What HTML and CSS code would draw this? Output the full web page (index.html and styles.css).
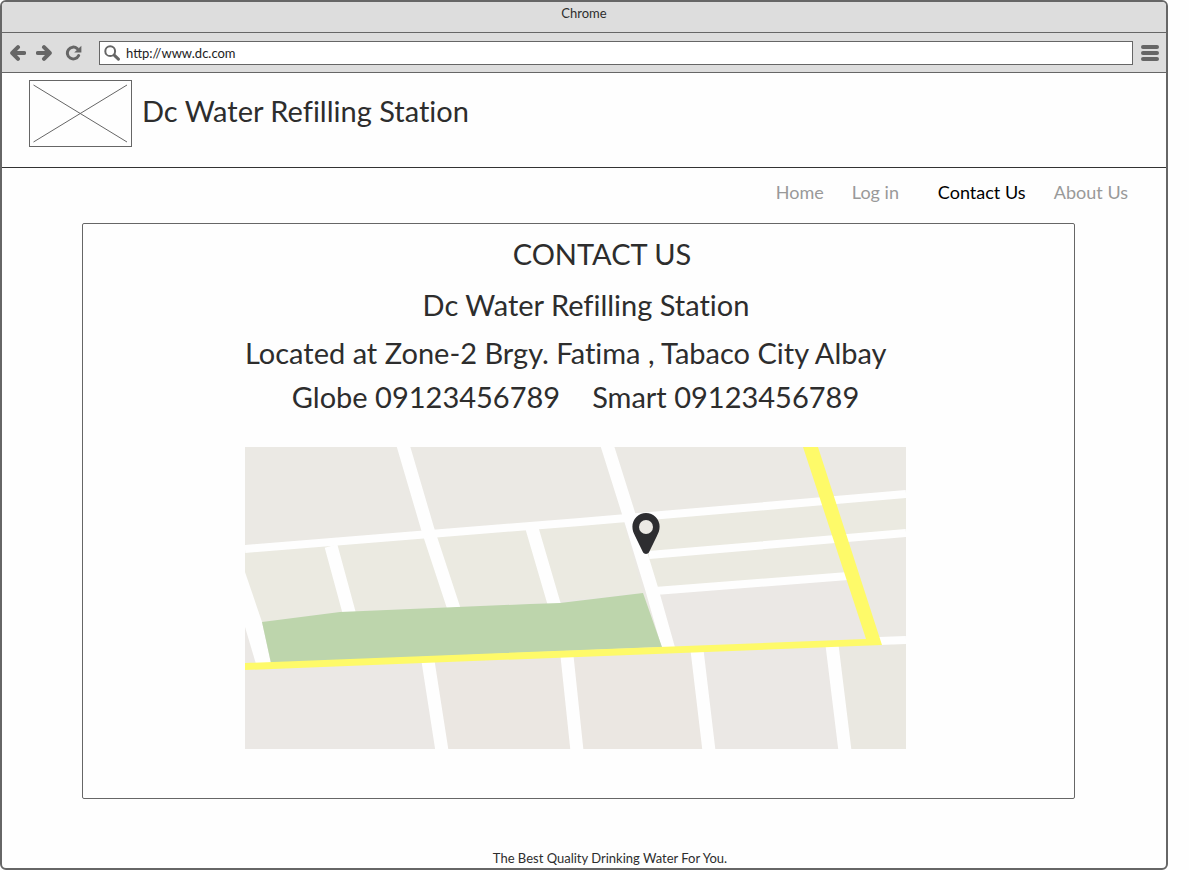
FILE: index.html
```html
<!DOCTYPE html>
<html lang="en">
<head>
<meta charset="utf-8">
<title>Dc Water Refilling Station</title>
<link rel="stylesheet" href="styles.css">
</head>
<body>
<div class="window">
  <div class="titlebar">Chrome</div>
  <div class="toolbar">
    <div class="controls">
      <button class="tool" type="button" aria-label="Back">
        <svg width="16" height="16" viewBox="0 0 16 16"><path class="stroke" d="M8 2.200 2.200 8 8 13.800M3 8H14.200"/></svg>
      </button>
      <button class="tool" type="button" aria-label="Forward">
        <svg width="16" height="16" viewBox="0 0 16 16"><path class="stroke" d="M8 2.200 13.800 8 8 13.800M13 8H1.800"/></svg>
      </button>
      <button class="tool reload" type="button" aria-label="Reload">
        <svg width="17" height="16" viewBox="0 0 17 16"><path class="ring" d="M13.600 10.600A5.900 5.900 0 1 1 12.200 3.600"/><path class="solid" d="M16.400 .8V7.400H9.200z"/></svg>
      </button>
    </div>
    <div class="address">
      <svg width="16" height="16" viewBox="0 0 16 16"><circle class="lens" cx="6.200" cy="6.200" r="4.900"/><path class="handle" d="M10.200 10.200 14.400 14.200"/></svg>
      <input class="url" type="text" value="http://www.dc.com" aria-label="Address">
    </div>
    <button class="tool menu" type="button" aria-label="Menu">
      <svg width="18" height="18" viewBox="0 0 18 18"><path class="bars" d="M2 3H16M2 9H16M2 15H16"/></svg>
    </button>
  </div>

  <header class="header">
    <svg class="logo" width="103" height="67" viewBox="0 0 103 67" role="img" aria-label="Logo"><rect x=".5" y=".5" width="102" height="66"/><path d="M4.500 5 98 62M4.500 62 98 5"/></svg>
    <span class="brand">Dc Water Refilling Station</span>
  </header>

  <nav class="nav">
    <a href="#home">Home</a>
    <a href="#login">Log in</a>
    <a class="current" href="#contact" aria-current="page">Contact Us</a>
    <a href="#about">About Us</a>
  </nav>

  <main class="panel">
    <h1 class="line title">CONTACT US</h1>
    <p class="line name">Dc Water Refilling Station</p>
    <p class="line place">Located at Zone-2 Brgy. Fatima , Tabaco City Albay</p>
    <p class="line phones"><span>Globe 09123456789</span><span>Smart 09123456789</span></p>
    <svg class="map" viewBox="0 0 661 302" role="img" aria-label="Map">
      <rect width="661" height="302" fill="#ebe9e4"/>
      <path fill="#ebeae1" d="M0 102 185 87 335 75 378 72 398 146 285 157 95 165 17 175 0 130zM385 71 661 47V86L600 91 602 129 412 144z"/>
      <path fill="#ebe8e5" d="M412 144 602 129 621 195 423 202zM0 219 636 195 661 193V302H0zM0 180 11 216 0 217z"/>
      <path fill="#ebe7e2" d="M183 213 452 203 464 302H197z"/>
      <path fill="#eae8e1" d="M587 197 661 193V302H600z"/>
      <path class="road" d="M0 102 185 87 335 75 661 47M404 108 661 86M410 144 603 129M634 194 661 193"/>
      <path class="street" d="M158 -2 183 83 210 165M86 99 105 169M286 78 310 160M362 -2 385 71 407 143 424 203M183 214 197 304M322 209 332 304M452 203 464 304M587 198 600 304"/>
      <path fill="#fefefe" d="M0 125 17 175 26 217H11L0 180z"/>
      <path fill="#bdd5ac" d="M17 175 95 165 285 157 315 156 398 146 417 200 26 216z"/>
      <path fill="#fefa69" d="M558 0H573L637 198 0 223V216L621 192z"/>
      <path fill="#2d2d30" fill-rule="evenodd" d="M401 66a13.600 13.600 0 0 1 13.600 13.600c0 4-1.200 6.500-2.800 9.600L404 105.300c-1.400 2.300-4.600 2.300-6 0L390.200 89.200c-1.600-3.100-2.800-5.600-2.800-9.600A13.600 13.600 0 0 1 401 66z"/>
      <circle cx="401" cy="80" r="7" fill="#ebe9e4"/>
    </svg>
  </main>

  <footer class="footer">The Best Quality Drinking Water For You.</footer>
</div>
</body>
</html>
```
FILE: styles.css
```css
* {
  box-sizing: border-box;
}

body {
  margin: 0;
  background: #fefefe;
  color: #2d2d2d;
  font-family: Lato, "Open Sans", sans-serif;
  font-variant-ligatures: none;
}

.window {
  display: flex;
  flex-direction: column;
  min-height: 100vh;
  margin-right: 21px;
  border: 2px solid #666;
  border-radius: 6px;
  overflow: hidden;
}

.titlebar {
  height: 31px;
  padding-top: 2px;
  border-bottom: 1px solid #666;
  background: #ddd;
  font-size: 13px;
  line-height: 18px;
  text-align: center;
}

.toolbar {
  display: flex;
  align-items: center;
  height: 40px;
  padding: 0 7px 0 8px;
  border-bottom: 1px solid #666;
  background: #ddd;
}

.controls {
  display: flex;
  gap: 10px;
  width: 89px;
}

.tool {
  display: flex;
  padding: 0;
  border: 0;
  background: none;
}

.reload {
  margin-left: 3px;
}

.menu {
  margin-left: 8px;
}

.tool svg,
.address svg {
  display: block;
  fill: none;
  stroke: #666;
  stroke-linecap: round;
  stroke-linejoin: round;
}

.stroke,
.bars {
  stroke-width: 4;
}

.ring {
  stroke-width: 3;
}

.tool .solid {
  fill: #666;
  stroke: none;
}

.lens {
  stroke-width: 2;
}

.handle {
  stroke-width: 3;
}

.address {
  display: flex;
  flex: 1;
  align-items: center;
  gap: 6px;
  height: 24px;
  padding: 0 4px;
  border: 1px solid #666;
  background: #fff;
}

.url {
  flex: 1;
  min-width: 0;
  padding: 0;
  border: 0;
  outline: 0;
  background: none;
  color: #222;
  font: 13px/20px Lato, "Open Sans", sans-serif;
}

.header {
  display: flex;
  align-items: flex-start;
  gap: 10px;
  height: 95px;
  padding: 7px 27px 0;
  border-bottom: 1px solid #333;
}

.logo {
  flex: none;
  fill: none;
  stroke: #666;
}

.brand,
.line {
  font-size: 29px;
  font-weight: 400;
  line-height: 34px;
}

.brand {
  padding-top: 14px;
}

.nav {
  display: grid;
  grid-template-columns: 76px 86px 116px auto;
  justify-content: end;
  padding: 12px 38px 19px;
  font-size: 18px;
  line-height: 24px;
}

.nav a {
  color: #999;
  text-decoration: none;
}

.nav .current {
  color: #000;
}

.panel {
  display: flex;
  flex-direction: column;
  margin: 0 91px 0 80px;
  padding: 13px 168px 49px 162px;
  border: 1px solid #666;
  border-radius: 2px;
}

.line {
  margin: 0;
  text-align: center;
  white-space: nowrap;
}

.title {
  padding-left: 53px;
}

.name {
  margin-top: 17px;
  padding-left: 21px;
}

.place {
  margin-top: 14px;
  text-align: left;
}

.phones {
  display: flex;
  justify-content: center;
  gap: 32px;
  margin: 10px 0 33px;
}

.map {
  display: block;
  width: 100%;
}

.road,
.street {
  fill: none;
  stroke: #fefefe;
  stroke-width: 8;
}

.street {
  stroke-width: 13;
}

.footer {
  margin-top: auto;
  padding: 0 0 0 52px;
  font-size: 13px;
  line-height: 20px;
  text-align: center;
}
```
